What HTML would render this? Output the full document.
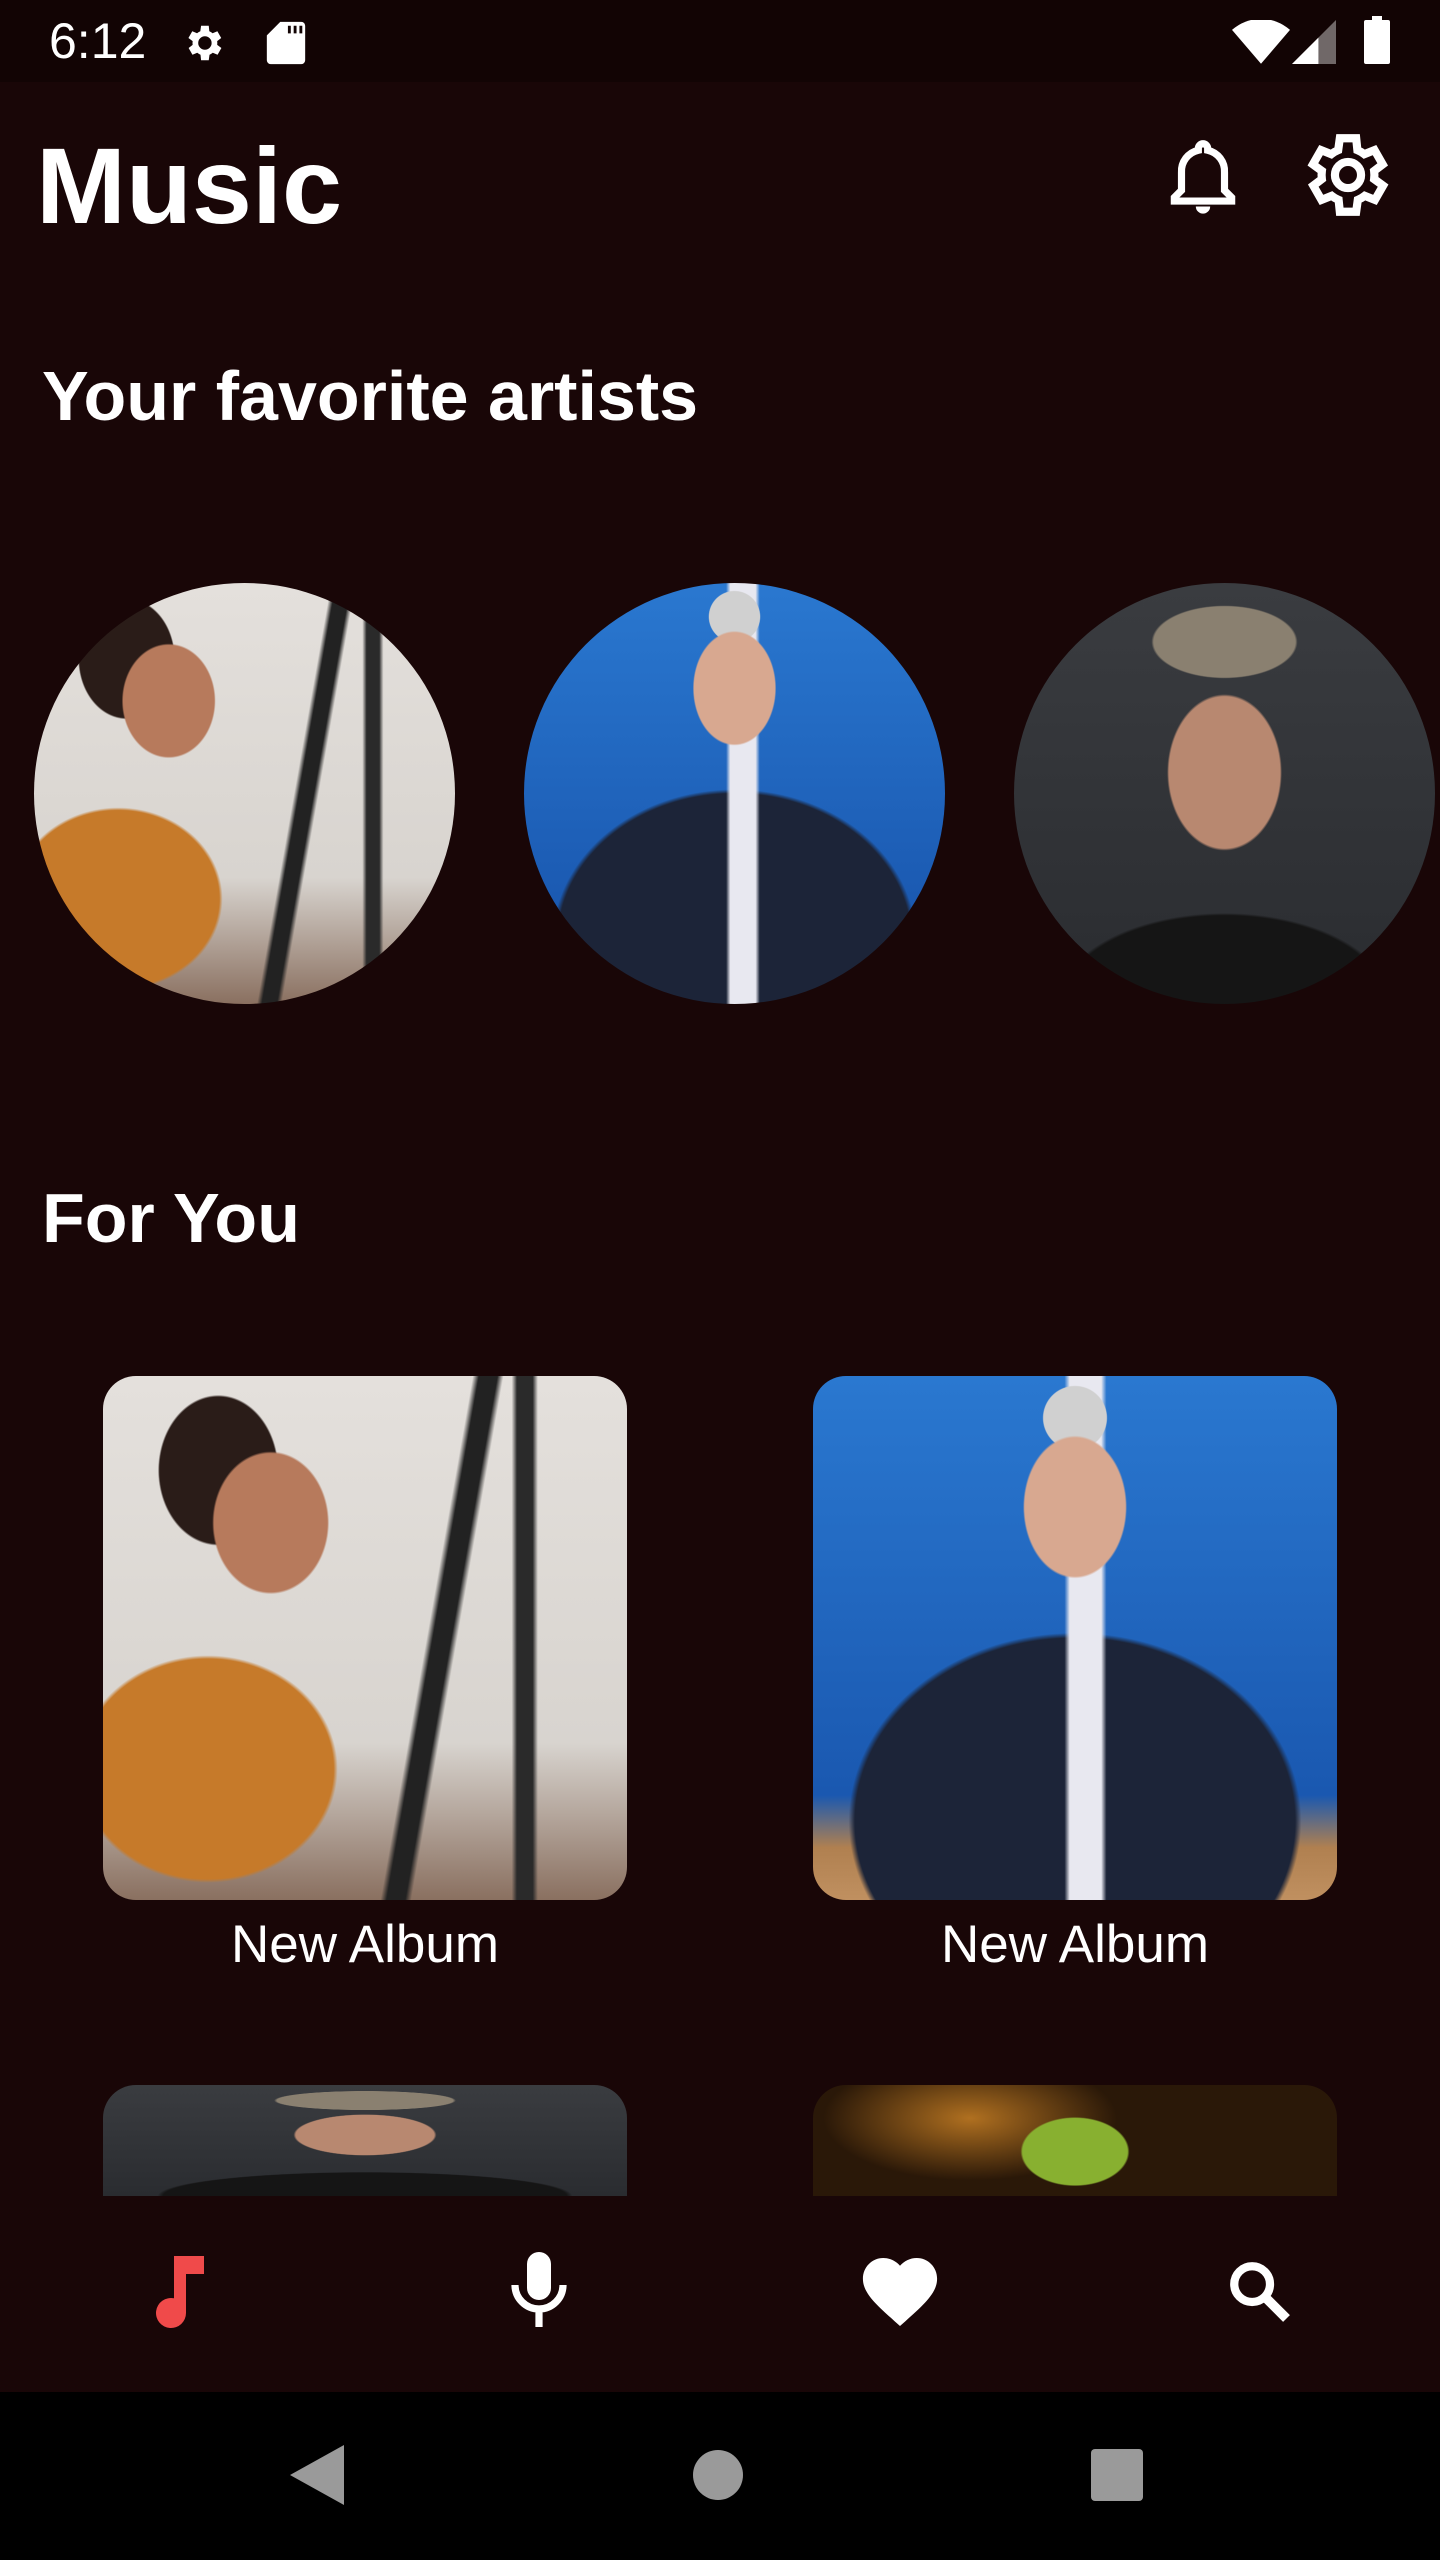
<!DOCTYPE html>
<html><head><meta charset="utf-8"><style>
*{margin:0;padding:0;box-sizing:border-box}
body{width:1440px;height:2560px;background:#190607;font-family:"Liberation Sans",Roboto,sans-serif;color:#fff;position:relative;overflow:hidden}
.abs{position:absolute}
.status{left:0;top:0;width:1440px;height:82px;background:#120404}
.h{font-weight:bold}
.circ{width:421px;height:421px;border-radius:50%;overflow:hidden;top:583px}
.card{width:524px;height:524px;border-radius:33px;overflow:hidden}
.lbl{font-size:53px;width:524px;text-align:center;top:1914px}
.woman{background:
 radial-gradient(ellipse 18% 22% at 32% 28%,#b77a5c 60%,transparent 62%),
 radial-gradient(ellipse 16% 20% at 22% 18%,#2a1c18 70%,transparent 72%),
 linear-gradient(100deg,transparent 60%,#222 61%,#222 64%,transparent 65%),
 linear-gradient(90deg,transparent 78%,#2a2a2a 79%,#2a2a2a 82%,transparent 83%),
 radial-gradient(ellipse 40% 35% at 20% 75%,#c67a2a 60%,transparent 62%),
 linear-gradient(180deg,#e4e0dc 0%,#d8d4cf 70%,#8a7060 100%)}
.biden{background:
 radial-gradient(ellipse 16% 22% at 50% 25%,#d8a890 60%,transparent 62%),
 radial-gradient(ellipse 10% 10% at 50% 8%,#d0d0d0 60%,transparent 62%),
 linear-gradient(90deg,transparent 48%,#e8e8f0 49%,#e8e8f0 55%,transparent 56%),
 radial-gradient(ellipse 60% 50% at 50% 85%,#1c2438 70%,transparent 72%),
 linear-gradient(180deg,#2a78d0,#1a58b0 80%,#b08050 90%,#c09060)}
.zayn{background:
 radial-gradient(ellipse 22% 30% at 50% 45%,#b88870 60%,transparent 62%),
 radial-gradient(ellipse 28% 14% at 50% 14%,#8a8070 60%,transparent 62%),
 radial-gradient(ellipse 55% 30% at 50% 100%,#151515 70%,transparent 72%),
 linear-gradient(#3a3c40,#2a2c30)}
.billie{background:radial-gradient(ellipse 20% 60% at 50% 60%,#88b030 50%,transparent 52%),radial-gradient(ellipse 40% 80% at 30% 30%,#b07020,#2a1808 70%)}
</style></head><body>
<div class="abs status"></div>
<div class="abs" style="left:49px;top:12px;font-size:50px">6:12</div>
<svg class="abs" style="left:180px;top:20px" width="46" height="46" viewBox="0 0 24 24"><path fill="#fff" d="M19.4 13a7.5 7.5 0 0 0 0-2l2.1-1.6-2-3.5-2.5 1a7 7 0 0 0-1.7-1L15 3h-4l-.4 2.9a7 7 0 0 0-1.7 1l-2.5-1-2 3.5L6.6 11a7.5 7.5 0 0 0 0 2l-2.1 1.6 2 3.5 2.5-1a7 7 0 0 0 1.7 1L11 21h4l.4-2.9a7 7 0 0 0 1.7-1l2.5 1 2-3.5zM13 15.5a3.5 3.5 0 1 1 0-7 3.5 3.5 0 0 1 0 7z"/></svg>
<svg class="abs" style="left:266px;top:20px" width="40" height="46" viewBox="0 0 20 24"><path fill="#fff" d="M7 1h11a2 2 0 0 1 2 2v18a2 2 0 0 1-2 2H2a2 2 0 0 1-2-2V8zM11 3v4h1.5V3zm3 0v4h1.5V3zm3 0v4h1.5V3z"/></svg>
<svg class="abs" style="left:1232px;top:20px" width="58" height="44" viewBox="0 0 24 18"><path fill="#fff" d="M12 18L0 4a18 18 0 0 1 24 0z"/></svg>
<svg class="abs" style="left:1292px;top:20px" width="44" height="44" viewBox="0 0 20 20"><path fill="#fff" d="M20 0v20H0z" opacity=".4"/><path fill="#fff" d="M12 8v12H0z"/></svg>
<svg class="abs" style="left:1364px;top:16px" width="26" height="48" viewBox="0 0 13 24"><path fill="#fff" d="M4 0h5v2h3a1 1 0 0 1 1 1v20a1 1 0 0 1-1 1H1a1 1 0 0 1-1-1V3a1 1 0 0 1 1-1h3z"/></svg>

<div class="abs h" style="left:36px;top:121px;font-size:108px;line-height:130px">Music</div>
<svg class="abs" style="left:1160px;top:128px" width="86" height="96" viewBox="0 0 24 24"><path fill="none" stroke="#fff" stroke-width="2" d="M12 3a1.3 1.3 0 0 1 1.3 1.3v.5A6 6 0 0 1 18 11v5l2 2v1H4v-1l2-2v-5a6 6 0 0 1 4.7-6.2v-.5A1.3 1.3 0 0 1 12 3z"/><path fill="#fff" d="M10 20.5h4a2 2 0 0 1-4 0z"/></svg>
<svg class="abs" style="left:1298px;top:126px" width="100" height="98" viewBox="0 0 24 24"><path fill="none" stroke="#fff" stroke-width="2" d="M19.4 13a7.5 7.5 0 0 0 0-2l2.1-1.6-2-3.5-2.5 1a7 7 0 0 0-1.7-1L15 3h-4l-.4 2.9a7 7 0 0 0-1.7 1l-2.5-1-2 3.5L6.6 11a7.5 7.5 0 0 0 0 2l-2.1 1.6 2 3.5 2.5-1a7 7 0 0 0 1.7 1L11 21h4l.4-2.9a7 7 0 0 0 1.7-1l2.5 1 2-3.5z" transform="translate(-1 0)"/><circle cx="12" cy="12" r="3.2" fill="none" stroke="#fff" stroke-width="2"/></svg>

<div class="abs h" style="left:42px;top:356px;font-size:70px">Your favorite artists</div>
<div class="abs circ woman" style="left:34px"></div>
<div class="abs circ biden" style="left:524px"></div>
<div class="abs circ zayn" style="left:1014px"></div>

<div class="abs h" style="left:42px;top:1178px;font-size:70px">For You</div>
<div class="abs card woman" style="left:103px;top:1376px"></div>
<div class="abs card biden" style="left:813px;top:1376px"></div>
<div class="abs lbl" style="left:103px">New Album</div>
<div class="abs lbl" style="left:813px">New Album</div>
<div class="abs card zayn" style="left:103px;top:2085px;height:111px;border-radius:33px 33px 0 0"></div>
<div class="abs card billie" style="left:813px;top:2085px;height:111px;border-radius:33px 33px 0 0"></div>

<svg class="abs" style="left:150px;top:2256px" width="60" height="72" viewBox="0 0 20 24"><path fill="#f04a4a" d="M8 0h10v6h-6v13a5 5 0 1 1-4-4.9z"/></svg>
<svg class="abs" style="left:509px;top:2252px" width="60" height="78" viewBox="0 0 20 26"><rect x="6" y="0" width="8" height="16" rx="4" fill="#fff"/><path fill="none" stroke="#fff" stroke-width="2.4" d="M2 11a8 8 0 0 0 16 0M10 19v6"/></svg>
<svg class="abs" style="left:862px;top:2258px" width="76" height="68" viewBox="0 0 24 22"><path fill="#fff" d="M12 22l-1.7-1.5C4.2 15 0 11.3 0 6.7 0 3 2.9 0 6.6 0c2.1 0 4.1 1 5.4 2.5C13.3 1 15.3 0 17.4 0 21.1 0 24 3 24 6.7c0 4.6-4.200 8.3-10.3 13.8z"/></svg>
<svg class="abs" style="left:1226px;top:2258px" width="66" height="66" viewBox="0 0 24 24"><circle cx="9.5" cy="9.5" r="6.5" fill="none" stroke="#fff" stroke-width="3"/><path d="M14 14l8 8" stroke="#fff" stroke-width="3.5"/></svg>

<div class="abs" style="left:0;top:2392px;width:1440px;height:168px;background:#000"></div>
<svg class="abs" style="left:290px;top:2445px" width="54" height="60" viewBox="0 0 18 20"><path fill="#9a9a9a" d="M18 0v20L0 10z"/></svg>
<div class="abs" style="left:693px;top:2450px;width:50px;height:50px;border-radius:50%;background:#9a9a9a"></div>
<div class="abs" style="left:1091px;top:2449px;width:52px;height:52px;border-radius:4px;background:#9a9a9a"></div>
</body></html>
